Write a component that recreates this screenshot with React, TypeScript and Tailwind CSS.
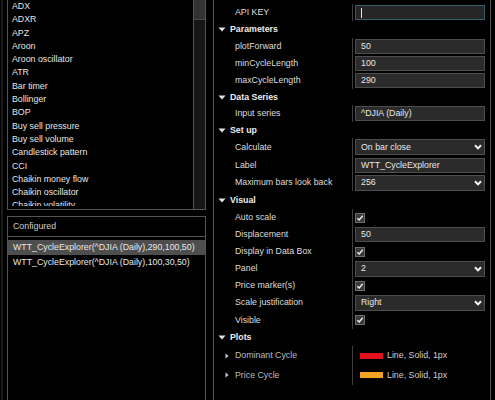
import React from "react";

const indicators = [
  "ADX",
  "ADXR",
  "APZ",
  "Aroon",
  "Aroon oscillator",
  "ATR",
  "Bar timer",
  "Bollinger",
  "BOP",
  "Buy sell pressure",
  "Buy sell volume",
  "Candlestick pattern",
  "CCI",
  "Chaikin money flow",
  "Chaikin oscillator",
  "Chaikin volatility",
];

function DownTri() {
  return (
    <svg width="8" height="5" viewBox="0 0 8 5" className="shrink-0">
      <polygon points="0.5,0.5 7.5,0.5 4,4.5" fill="#e6e6e6" />
    </svg>
  );
}

function RightTri() {
  return (
    <svg width="4" height="6" viewBox="0 0 4 6" className="shrink-0">
      <polygon points="0.5,0.5 3.5,3 0.5,5.5" fill="#cfcfcf" />
    </svg>
  );
}

function Chevron() {
  return (
    <svg width="8" height="6" viewBox="0 0 8 6" className="shrink-0">
      <polyline points="1,1.2 4,4.4 7,1.2" fill="none" stroke="#f2f2f2" strokeWidth="2" />
    </svg>
  );
}

function Check() {
  return (
    <div className="w-[10px] h-[10px] border border-[#6e6e6e] bg-[#3a3a3a] flex items-center justify-center">
      <svg width="8" height="8" viewBox="0 0 8 8">
        <polyline points="1.3,4.2 3.2,6 6.7,1.8" fill="none" stroke="#f0f0f0" strokeWidth="1.4" />
      </svg>
    </div>
  );
}

function Header({ title, h }: { title: string; h: string }) {
  return (
    <div className={`flex items-center pl-[4px] ${h}`}>
      <DownTri />
      <span className="ml-[4px] font-bold text-[#ececec]">{title}</span>
    </div>
  );
}

function Row({
  label,
  h,
  children,
}: {
  label: string;
  h: string;
  children: React.ReactNode;
}) {
  return (
    <div className={`flex ${h}`}>
      <div className="w-[138px] shrink-0 pl-[21px] flex items-center text-[#dedede]">{label}</div>
      <div className="w-px bg-[#3e3e3e] shrink-0" />
      <div className="flex-1 pl-[2px] pr-[5px] flex items-center">{children}</div>
    </div>
  );
}

function Input({ value }: { value: string }) {
  return (
    <div className="w-full h-[15px] bg-[#2b2b2b] border border-[#4d4d4d] px-[5px] flex items-center text-[#e8e8e8]">
      {value}
    </div>
  );
}

function Select({ value }: { value: string }) {
  return (
    <div className="w-full h-[16px] bg-[#2b2b2b] border border-[#4d4d4d] pl-[5px] pr-[2px] flex items-center justify-between text-[#e8e8e8]">
      <span>{value}</span>
      <Chevron />
    </div>
  );
}

function PlotRow({ label, color, h }: { label: string; color: string; h: string }) {
  return (
    <div className={`flex ${h}`}>
      <div className="w-[138px] shrink-0 pl-[11px] flex items-center text-[#bdbdbd]">
        <RightTri />
        <span className="ml-[6px]">{label}</span>
      </div>
      <div className="w-px bg-[#3e3e3e] shrink-0" />
      <div className="flex-1 pl-[7px] flex items-center text-[#cfcfcf]">
        <div className={`w-[23px] h-[6px] ${color}`} />
        <span className="ml-[4px]">Line, Solid, 1px</span>
      </div>
    </div>
  );
}

export default function App() {
  return (
    <div
      className="w-[495px] h-[400px] bg-black overflow-hidden flex text-[8.8px] leading-none"
      style={{ fontFamily: '"Liberation Sans", Arial, sans-serif' }}
    >
      <div className="w-[7px] shrink-0 flex">
        <div className="ml-[1px] w-[2px] bg-[#1c1c1c]" />
      </div>

      <div className="w-[199px] shrink-0 flex flex-col">
        <div className="h-[210px] shrink-0 border-x border-b border-[#555] flex">
          <div className="flex-1 mb-[3px] pl-[4px] text-[#e6e6e6] overflow-hidden">
            {indicators.map((t) => (
              <div key={t} className="h-[13.3px] leading-[13.3px] whitespace-nowrap">
                {t}
              </div>
            ))}
          </div>
          <div className="w-[12px] shrink-0 border-l border-[#555] bg-[#161616]">
            <div className="h-[20px] bg-[#333] border-b border-[#4a4a4a]" />
          </div>
        </div>

        <div className="mt-[6px] flex-1 border border-[#555] mb-[-10px] flex flex-col">
          <div className="h-[20px] shrink-0 border-b border-[#555] pl-[5px] flex items-center text-[#cdcdcd]">
            Configured
          </div>
          <div className="pt-[3px] text-[#e8e8e8]">
            <div className="h-[15px] bg-[#4e4e4e] pl-[5px] flex items-center whitespace-nowrap">
              WTT_CycleExplorer(^DJIA (Daily),290,100,50)
            </div>
            <div className="h-[14.5px] pl-[5px] flex items-center whitespace-nowrap">
              WTT_CycleExplorer(^DJIA (Daily),100,30,50)
            </div>
          </div>
        </div>
      </div>

      <div className="w-[7px] shrink-0" />

      <div className="w-[278px] shrink-0 border-x border-[#555] pt-[4px] flex flex-col">
        <Row label="API KEY" h="h-[17px]">
          <div className="w-full h-[15px] bg-[#262626] border border-[#2f6068] pl-[5px] flex items-center">
            <div className="w-px h-[10px] bg-[#e8e8e8]" />
          </div>
        </Row>
        <Header title="Parameters" h="h-[17px]" />
        <Row label="plotForward" h="h-[17px]">
          <Input value="50" />
        </Row>
        <Row label="minCycleLength" h="h-[17px]">
          <Input value="100" />
        </Row>
        <Row label="maxCycleLength" h="h-[17px]">
          <Input value="290" />
        </Row>
        <Header title="Data Series" h="h-[16px]" />
        <Row label="Input series" h="h-[17px]">
          <Input value="^DJIA (Daily)" />
        </Row>
        <Header title="Set up" h="h-[16px]" />
        <Row label="Calculate" h="h-[18px]">
          <Select value="On bar close" />
        </Row>
        <Row label="Label" h="h-[18px]">
          <Input value="WTT_CycleExplorer" />
        </Row>
        <Row label="Maximum bars look back" h="h-[17px]">
          <Select value="256" />
        </Row>
        <Header title="Visual" h="h-[18px]" />
        <Row label="Auto scale" h="h-[17px]">
          <Check />
        </Row>
        <Row label="Displacement" h="h-[17px]">
          <Input value="50" />
        </Row>
        <Row label="Display in Data Box" h="h-[17px]">
          <Check />
        </Row>
        <Row label="Panel" h="h-[17px]">
          <Select value="2" />
        </Row>
        <Row label="Price marker(s)" h="h-[17px]">
          <Check />
        </Row>
        <Row label="Scale justification" h="h-[17px]">
          <Select value="Right" />
        </Row>
        <Row label="Visible" h="h-[18px]">
          <Check />
        </Row>
        <Header title="Plots" h="h-[17px]" />
        <PlotRow label="Dominant Cycle" color="bg-[#e0101c]" h="h-[19px]" />
        <PlotRow label="Price Cycle" color="bg-[#f2a31f]" h="h-[20px]" />
      </div>
    </div>
  );
}
